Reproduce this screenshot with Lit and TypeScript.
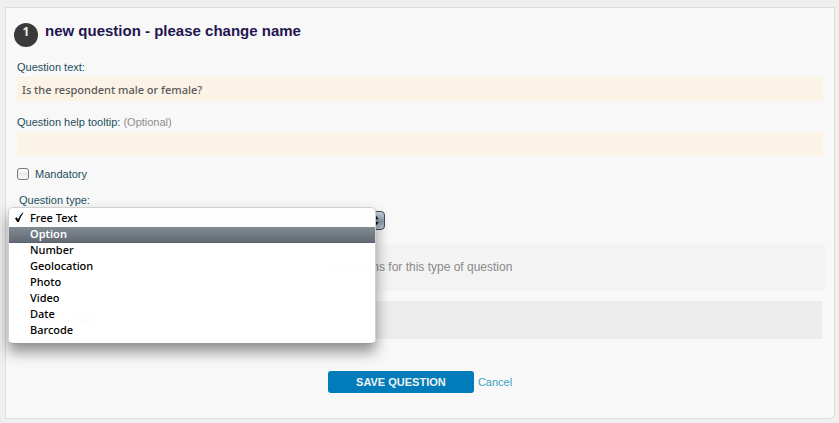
import { LitElement, html, css, svg } from "lit";
import { customElement, state } from "lit/decorators.js";
import { classMap } from "lit/directives/class-map.js";

const TYPES = ["Free Text", "Option", "Number", "Geolocation", "Photo", "Video", "Date", "Barcode"];

const tick = svg`<path d="M1 6.2 L2.8 5.2 L4 7.6 Q5.6 3.4 8.6 0.4 L9.4 0.8 Q6.4 4.8 4.8 10 L3.2 10 Z" fill="currentColor"/>`;

@customElement("type-picker")
export class TypePicker extends LitElement {
  @state() private selected = "Free Text";
  @state() private active = "Option";

  static styles = css`
    :host {
      display: block;
      position: relative;
    }
    .field {
      position: relative;
      display: block;
      width: 366px;
      max-width: 100%;
      height: 19px;
      margin-left: 2px;
    }
    select {
      appearance: none;
      box-sizing: border-box;
      width: 100%;
      height: 19px;
      padding: 0 8px;
      border: 1px solid #454860;
      border-radius: 4px;
      background: linear-gradient(#c9d2da, #94a2ae 50%, #8796a3 51%, #b9c8d2);
      color: #000;
      font: 11px "Noto Sans", sans-serif;
    }
    .arrows {
      position: absolute;
      right: 6px;
      top: 4px;
      width: 7px;
      height: 11px;
      pointer-events: none;
    }
    .menu {
      position: absolute;
      z-index: 1;
      top: -4px;
      left: -9px;
      box-sizing: border-box;
      width: 368px;
      padding: 3px 0 4px;
      border: 1px solid #d0d0d0;
      border-bottom-color: #999;
      border-radius: 5px;
      background: rgba(255, 255, 255, 0.98);
      box-shadow: 0 8px 14px rgba(0, 0, 0, 0.42);
    }
    .item {
      display: flex;
      align-items: center;
      box-sizing: border-box;
      width: 100%;
      height: 16px;
      padding: 0 0 2px;
      border: 0;
      background: none;
      color: #000;
      font: 500 11px/14px "Noto Sans", sans-serif;
      text-align: left;
    }
    .item.active {
      background: linear-gradient(#828a92, #626b75 94%, #4f5963);
      color: #fff;
      font-weight: 600;
    }
    .mark {
      width: 16px;
      height: 12px;
      padding-left: 5px;
    }
  `;

  render() {
    return html`
      <div class="field">
        <select aria-label="Question type">
          ${TYPES.map((t) => html`<option ?selected=${t === this.selected}>${t}</option>`)}
        </select>
        <svg class="arrows" viewBox="0 0 7 12" aria-hidden="true">
          <path d="M3.5 0 L7 4.5 H0 Z M0 7.5 H7 L3.5 12 Z" fill="#000" />
        </svg>
      </div>
      <div class="menu" role="listbox" aria-label="Question type">
        ${TYPES.map(
          (t) => html`<button
            type="button"
            role="option"
            aria-selected=${t === this.selected}
            class=${classMap({ item: true, active: t === this.active })}
            @mouseenter=${() => (this.active = t)}
            @click=${() => (this.selected = t)}
          ><svg class="mark" viewBox="0 0 16 12" aria-hidden="true">${t === this.selected ? tick : null}</svg>${t}</button>`
        )}
      </div>
    `;
  }
}

@customElement("app-root")
export class AppRoot extends LitElement {
  static styles = css`
    :host {
      display: block;
      box-sizing: border-box;
      min-height: 100vh;
      padding: 7px 4px 4px 5px;
      background: #efefef;
      color: #1c4f60;
      font: 11px/14px "Liberation Sans", Arial, sans-serif;
    }
    .panel {
      border: 1px solid #ddd;
      border-radius: 0 0 5px 0;
      background: #f8f8f8;
      padding: 14px 11px 25px;
    }
    header {
      display: flex;
      gap: 7px;
      margin-left: -3px;
    }
    .number {
      width: 24px;
      height: 24px;
      margin-top: 1px;
      border-radius: 50%;
      background: #3a3a3a;
      color: #eee;
      font: bold 12px/18px "Noto Sans", sans-serif;
      text-align: center;
    }
    h1 {
      margin: 0;
      color: #231550;
      font-size: 15px;
      line-height: 18px;
    }
    .label {
      display: block;
      margin: 14px 0 3px;
    }
    header + .label {
      margin-top: 13px;
    }
    .optional {
      color: #8d8d8d;
    }
    .text {
      display: block;
      box-sizing: border-box;
      width: 100%;
      height: 24px;
      padding: 0 5px;
      border: 0;
      background: #faf3e6;
      color: #5a5a5a;
      font: 500 11px "Noto Sans", sans-serif;
    }
    .check {
      display: flex;
      align-items: center;
      gap: 6px;
      margin-top: 11px;
    }
    .check input {
      appearance: none;
      box-sizing: border-box;
      width: 12px;
      height: 12px;
      margin: 0;
      border: 1px solid #777;
      border-radius: 3px;
      background: linear-gradient(#fff, #e8e8e8 50%, #fff);
    }
    .type {
      margin: 12px 2px 4px;
    }
    .none {
      margin: 14px -2px 10px;
      padding: 14px 0 15px;
      background: #f3f3f3;
      color: #8a8a8a;
      font-size: 12px;
      line-height: 18px;
      text-align: center;
    }
    .dependent {
      padding: 12px 28px;
      margin-right: 1px;
      background: #ececec;
    }
    footer {
      display: flex;
      justify-content: center;
      align-items: center;
      gap: 4px;
      margin-top: 32px;
    }
    .save {
      width: 146px;
      height: 22px;
      padding: 0;
      border: 0;
      border-radius: 3px;
      background: #007cba;
      color: #f2f2f2;
      font: bold 11px "Liberation Sans", Arial, sans-serif;
    }
    a {
      color: #3ba0c4;
      text-decoration: none;
    }
  `;

  render() {
    return html`
      <form class="panel" @submit=${(e: Event) => e.preventDefault()}>
        <header>
          <span class="number">1</span>
          <h1>new question - please change name</h1>
        </header>
        <label class="label" for="text">Question text:</label>
        <input class="text" id="text" type="text" value="Is the respondent male or female?" />
        <label class="label" for="help">Question help tooltip: <span class="optional">(Optional)</span></label>
        <input class="text" id="help" type="text" />
        <label class="check"><input type="checkbox" />Mandatory</label>
        <div class="label type">Question type:</div>
        <type-picker></type-picker>
        <div class="none">No options for this type of question</div>
        <div class="dependent">Dependent</div>
        <footer>
          <button class="save" type="submit">SAVE QUESTION</button>
          <a href="#cancel">Cancel</a>
        </footer>
      </form>
    `;
  }
}
